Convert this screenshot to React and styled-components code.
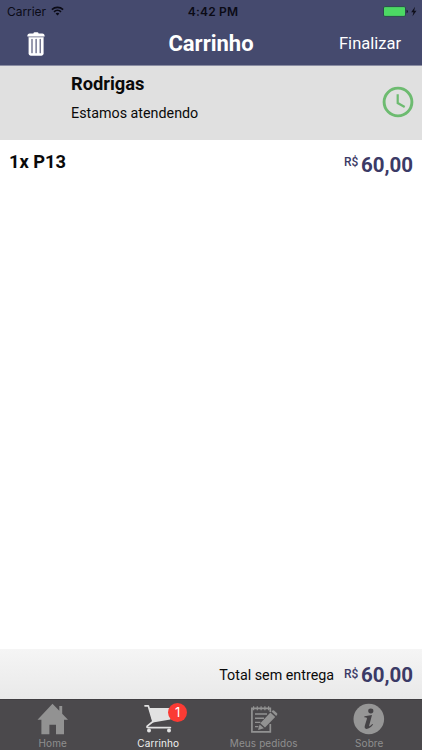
import styled, { createGlobalStyle } from "styled-components";

const GlobalStyle = createGlobalStyle`
  * {
    box-sizing: border-box;
    margin: 0;
    padding: 0;
  }

  body {
    background-color: #fff;
    font-family: Roboto, sans-serif;
    color: #0a0a0a;
  }

  button {
    border: none;
    background: none;
    font-family: inherit;
    color: inherit;
    cursor: pointer;
  }

  svg {
    display: block;
  }
`;

const tabs = [
  { label: "Home", icon: HomeIcon },
  { label: "Carrinho", icon: CartIcon, badge: 1, active: true },
  { label: "Meus pedidos", icon: OrdersIcon },
  { label: "Sobre", icon: InfoIcon },
];

function WifiIcon() {
  return (
    <svg width="13" height="10" viewBox="0 0 13 10" fill="none" stroke="#0b0b16">
      <path d="M0.9 3.6C4 0.6 9 0.6 12.1 3.6" strokeWidth="1.6" />
      <path d="M3 5.8C5 3.9 8 3.9 10 5.8" strokeWidth="1.6" />
      <path d="M4.6 7.4C5.7 6.4 7.3 6.4 8.4 7.4L6.5 9.4Z" fill="#0b0b16" stroke="none" />
    </svg>
  );
}

function BatteryIcon() {
  return (
    <svg width="34" height="11" viewBox="0 0 34 11">
      <rect x="0.5" y="0.6" width="22" height="9.8" rx="1.4" fill="#4cd964" stroke="#2c4a4e" />
      <path d="M23.6 3.8C25.3 4.2 25.3 6.8 23.6 7.2Z" fill="#10101c" />
      <path d="M32 0.8L28.2 6.2H30.4L29.5 10.2L33.5 4.7H31.2Z" fill="#10101c" />
    </svg>
  );
}

function TrashIcon() {
  return (
    <svg width="18" height="24" viewBox="0 0 18 24">
      <path
        fill="#fff"
        d="M6.4 1.4C6.6 0.4 7.2 0.2 8 0.2H10C10.8 0.2 11.4 0.4 11.6 1.4H15.3C16.8 1.4 17.7 2.4 17.7 4.5H0.3C0.3 2.4 1.2 1.4 2.7 1.4Z"
      />
      <path fill="#fff" d="M1.6 4.5H16.6V21.6Q16.6 23.7 14.5 23.7H3.7Q1.6 23.7 1.6 21.6Z" />
      <path d="M1.6 5H16.6" stroke="#454a6e" strokeWidth="0.5" />
      <path d="M5 7.3V20.7M9.1 7.3V20.7M13.2 7.3V20.7" stroke="#454a6e" strokeWidth="1.1" strokeLinecap="round" />
    </svg>
  );
}

function ClockIcon() {
  return (
    <svg width="32" height="32" viewBox="0 0 32 32" fill="none" stroke="#6dbb70">
      <circle cx="16" cy="16" r="13.9" strokeWidth="2.9" />
      <path d="M15.7 8.2V17L22.7 21" strokeWidth="2.2" />
    </svg>
  );
}

function HomeIcon() {
  return (
    <svg width="32" height="32" viewBox="0 0 32 32" fill="#929292">
      <path d="M15.5 0.8L22.3 7.8V3H25.2V10.8L31 16.8H27V31.2H19V21.8H12.4V31.2H4.4V16.8H0.5Z" />
    </svg>
  );
}

function CartIcon() {
  return (
    <svg width="32" height="32" viewBox="0 0 32 32" fill="none" stroke="#e2e2e2">
      <path
        d="M3 2.8H6.3L11 18.5L5.2 23.1Q4.3 24.6 6.3 24.6H28.4"
        strokeWidth="1.7"
        strokeLinecap="round"
        strokeLinejoin="round"
      />
      <path d="M7 4.9H31L28.4 16.6L10.8 19.4Z" fill="#e2e2e2" stroke="none" />
      <circle cx="7" cy="27.4" r="2" fill="#e2e2e2" stroke="none" />
      <circle cx="27" cy="27.4" r="2" fill="#e2e2e2" stroke="none" />
    </svg>
  );
}

function OrdersIcon() {
  return (
    <svg width="32" height="32" viewBox="0 0 32 32" fill="none" stroke="#929292">
      <path d="M22.3 21V28.8H3.9V5.4H22.3V9" strokeWidth="1.7" />
      <path d="M5.6 3.2V7.3M9.3 3.2V7.3M13.1 3.2V7.3M16.9 3.2V7.3M20.6 3.2V7.3" strokeWidth="1.2" />
      <path d="M7 11H19M7 15.2H16M7 19.4H12.4M7 23.6H10.4" strokeWidth="1.4" />
      <path
        d="M22.4 9.6L27.2 14L17 24.6L12.3 20.3ZM23.5 8.5L24.6 7.5Q25.3 7 26 7.5L29.1 10.3Q29.7 11 29.1 11.7L28.2 12.9ZM11.6 21.4L15.9 25.3L10 27Z"
        fill="#929292"
        stroke="none"
      />
    </svg>
  );
}

function InfoIcon() {
  return (
    <svg width="32" height="32" viewBox="0 0 32 32">
      <circle cx="15.8" cy="16" r="15.3" fill="#969696" />
      <g fill="#454346">
        <ellipse cx="17.8" cy="8" rx="2.6" ry="2.4" />
        <path d="M11.5 13.2L19 12L16.2 22.4Q16 23.6 17 23L19.3 20.9L20.1 21.6Q16.6 26 13.4 25.9Q11.1 25.6 11.8 22.8L14 15.4Q14.2 14.4 11.2 14.3Z" />
      </g>
    </svg>
  );
}

function Price({ value, currencyTop = 3 }) {
  return (
    <PriceWrapper>
      <Currency $top={currencyTop}>R$</Currency>
      <Amount>{value}</Amount>
    </PriceWrapper>
  );
}

function App() {
  return (
    <Screen>
      <GlobalStyle />
      <Header>
        <StatusBar>
          <Carrier>
            Carrier
            <WifiIcon />
          </Carrier>
          <Time>4:42 PM</Time>
          <Battery>
            <BatteryIcon />
          </Battery>
        </StatusBar>
        <NavBar>
          <TrashButton aria-label="Limpar carrinho">
            <TrashIcon />
          </TrashButton>
          <Title>Carrinho</Title>
          <FinishButton>Finalizar</FinishButton>
        </NavBar>
      </Header>

      <Store>
        <div>
          <StoreName>Rodrigas</StoreName>
          <StoreStatus>Estamos atendendo</StoreStatus>
        </div>
        <ClockIcon />
      </Store>

      <Items>
        <Item>
          <ItemName>1x P13</ItemName>
          <Price value="60,00" />
        </Item>
      </Items>

      <Total>
        <TotalLabel>Total sem entrega</TotalLabel>
        <Price value="60,00" currencyTop={5} />
      </Total>

      <TabBar>
        {tabs.map(({ label, icon: Icon, badge, active }) => (
          <Tab key={label} $active={active}>
            <TabIcon>
              <Icon />
              {badge ? <Badge>{badge}</Badge> : null}
            </TabIcon>
            <span>{label}</span>
          </Tab>
        ))}
      </TabBar>
    </Screen>
  );
}

const Screen = styled.div`
  width: 422px;
  height: 750px;
  display: flex;
  flex-direction: column;
  overflow: hidden;
  background-color: #fff;
`;

const Header = styled.header`
  height: 66px;
  background-color: #454a6e;
  border-bottom: 1px solid #8a8da2;
`;

const StatusBar = styled.div`
  height: 22px;
  display: grid;
  grid-template-columns: 1fr auto 1fr;
  align-items: center;
  padding: 0 5px 0 7px;
  font-family: Inter, sans-serif;
  font-size: 12px;
  color: #0b0b16;
`;

const Carrier = styled.div`
  display: flex;
  align-items: center;
  gap: 5px;
  letter-spacing: -0.05px;
`;

const Time = styled.div`
  font-weight: 600;
  letter-spacing: 0.2px;
  padding-left: 2px;
`;

const Battery = styled.div`
  display: flex;
  justify-content: flex-end;
`;

const NavBar = styled.nav`
  height: 43px;
  display: grid;
  grid-template-columns: 1fr auto 1fr;
  align-items: center;
  color: #fff;
`;

const TrashButton = styled.button`
  justify-self: start;
  padding-left: 27px;
`;

const Title = styled.h1`
  font-size: 22px;
  line-height: 26px;
  font-weight: 700;
`;

const FinishButton = styled.button`
  justify-self: end;
  padding-right: 21px;
  font-size: 16.5px;
  line-height: 20px;
`;

const Store = styled.section`
  height: 74px;
  display: flex;
  justify-content: space-between;
  align-items: flex-start;
  padding: 7px 8px 0 71px;
  background-color: #e0e0e0;

  svg {
    margin-top: 13px;
  }
`;

const StoreName = styled.h2`
  font-size: 18.3px;
  line-height: 22px;
  font-weight: 700;
`;

const StoreStatus = styled.p`
  margin-top: 9px;
  font-size: 14.3px;
  line-height: 19px;
`;

const Items = styled.ul`
  flex: 1;
  list-style: none;
`;

const Item = styled.li`
  display: flex;
  justify-content: space-between;
  padding: 11px 9px 0 9px;
`;

const ItemName = styled.span`
  font-size: 18.3px;
  line-height: 22px;
  font-weight: 700;
`;

const PriceWrapper = styled.div`
  display: flex;
  align-items: flex-start;
  gap: 2.5px;
  color: #3b3a66;
`;

const Currency = styled.span`
  padding-top: ${({ $top }) => $top}px;
  font-size: 12px;
  line-height: 16px;
  font-weight: 500;
`;

const Amount = styled.span`
  padding-top: 1px;
  font-size: 20.5px;
  line-height: 26px;
  font-weight: 700;
`;

const Total = styled.footer`
  height: 50px;
  display: flex;
  justify-content: flex-end;
  align-items: center;
  gap: 10px;
  padding: 1px 9px 0 0;
  background: linear-gradient(#f5f5f5, #e9e9e9);
`;

const TotalLabel = styled.span`
  font-size: 14.3px;
  line-height: 18px;
`;

const TabBar = styled.nav`
  height: 51px;
  display: grid;
  grid-template-columns: repeat(4, 1fr);
  background-color: #4b494c;
  border-top: 1px solid #403e41;
`;

const Tab = styled.button`
  display: flex;
  flex-direction: column;
  align-items: center;
  padding-top: 3px;
  font-family: Inter, sans-serif;
  font-size: 10px;
  line-height: 13px;
  letter-spacing: 0.1px;
  color: ${({ $active }) => ($active ? "#f0f0f0" : "#8f8f8f")};

  span {
    margin-top: 2px;
  }
`;

const TabIcon = styled.div`
  position: relative;
`;

const Badge = styled.b`
  position: absolute;
  top: 0;
  left: 26px;
  width: 19px;
  height: 19px;
  border-radius: 50%;
  background-color: #fb3b34;
  color: #fff;
  font-size: 13px;
  font-weight: 400;
  line-height: 19px;
  text-align: center;
`;

export default App;
